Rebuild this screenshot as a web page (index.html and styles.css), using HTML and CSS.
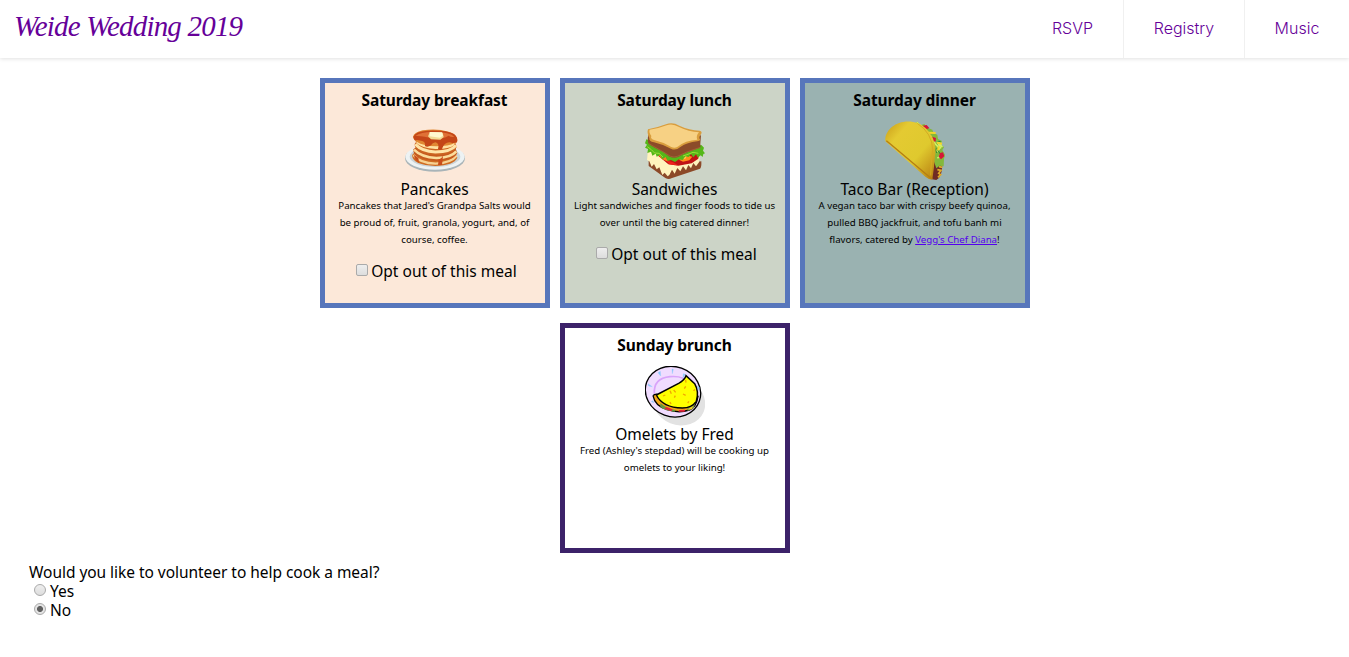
FILE: index.html
```html
<!DOCTYPE html>
<html lang="en">
<head>
<meta charset="utf-8">
<title>Weide Wedding 2019</title>
<link rel="stylesheet" href="styles.css">
</head>
<body>
<header class="header">
  <a class="logo">Weide Wedding 2019</a>
  <nav class="nav"><a class="nav-rsvp">RSVP</a><a class="nav-registry">Registry</a><a class="nav-music">Music</a></nav>
</header>
<main>
  <section class="meals">
    <article class="card breakfast">
      <h2>Saturday breakfast</h2>
      <svg class="pic" viewBox="15 3 180 180">
        <ellipse cx="105" cy="115" rx="90" ry="40" fill="#a9b4b8"/>
        <ellipse cx="105" cy="111" rx="89" ry="38" fill="#edf2f3"/>
        <ellipse cx="105" cy="110" rx="76" ry="31" fill="#c9d3d7"/>
        <path d="M36 106q3 30 70 32q55-2 66-25l-8-16H44z" fill="#cf6c22"/>
        <path d="M40 105q20 25 67 26q47-2 63-24" fill="none" stroke="#f7d293" stroke-width="7"/>
        <path d="M40 88q-2 29 66 35q57-1 66-24l-6-16H46z" fill="#c65a1e"/>
        <path d="M42 89q22 23 67 25q44-1 60-20" fill="none" stroke="#fbdc9b" stroke-width="8"/>
        <path d="M44 72q-2 28 62 33q57-1 64-25l-6-14H48z" fill="#cc6422"/>
        <path d="M46 73q20 22 60 23q47-1 62-20" fill="none" stroke="#ffe4a8" stroke-width="9"/>
        <path d="M39 51q2-14 29-20q41-7 78 4q27 8 26 27q-5 20-64 22q-61-5-69-33" fill="#e08733"/>
        <path d="M50 65q20 13 59 14q38 0 54-10v7q-21 13-57 11q-42-3-57-18z" fill="#ffe0a0"/>
        <path d="M40 50q6-16 42-18q58-2 80 10q13 10 9 25l-13 3q-8-5-17-2q-12 5-15 20q-7 5-12-1q5-17-8-20q-9 1-13 9q-11 7-18 2q2-12-8-15l-16-3q-9 4-11-10z" fill="#c44618"/>
        <path d="M47 47q20-13 56-11q45 0 60 14q-9 3-17-3q-16 10-42 10q-40-11-57-9" fill="#df7136"/>
        <path d="M116 119q8-2 13-12l-3 28h-12z" fill="#c94e1b"/>
        <path d="M42 104l13 10 2 14q-14-8-15-24" fill="#c94e1b"/>
        <path d="M84 49l6-13 38 2 3 13-10 8-28-1z" fill="#f2dc96"/>
        <path d="M89 36l37 1 3 10-10 6-30-4z" fill="#fff9cf"/>
      </svg>
      <p class="meal">Pancakes</p>
      <p class="desc">Pancakes that Jared's Grandpa Salts would<br>be proud of, fruit, granola, yogurt, and, of<br>course, coffee.</p>
      <label class="opt"><input type="checkbox"><span>Opt out of this meal</span></label>
    </article>
    <article class="card lunch">
      <h2>Saturday lunch</h2>
      <svg class="pic" viewBox="15 3 180 180">
        <path d="M26 122v16l50 36q10 5 18 1l86-29q5-3 4-22l-90 12z" fill="#8c4928"/>
        <path d="M24 90l-3 30 7 4 7 16 7-8 8 16 8-6 9 23 7-7 9 11 5-4 8-16 8 12 8-17 9 10 8-15 9 12 7-16 8 10 7-16 8 10 9-12 3-20-69-9z" fill="#fff3bd"/>
        <path d="M43 98l24 20 18 15 30 4 40-7 20-14 2-16-35-4-50 12z" fill="#c01214"/>
        <path d="M50 97l28 14 8 15-22-10z" fill="#ff7a22"/>
        <path d="M80 122q22 2 33 14l-26-3z" fill="#ef211b"/>
        <path d="M117 119l20-14 20 5-9 11-19 4z" fill="#ff8e1b"/>
        <path d="M121 117l20-10-5 9z" fill="#ffd64a"/>
        <path d="M19 58l-4 12 6 4-6 9 9 4-2 12 11-4 4 12 10-6 3 9 10-5 7 13 10-7 6 12 10-3 12 6 12-8 11 2 8-11 10 2 7-9 7 10 8-9 6 10 8-7 6 5 2-9 5-2-6-8 3-9-8-8-80 12z" fill="#55b719"/>
        <path d="M22 80l12 9 10 10 13 1 12 11m60-3l15-5 15-6 16 3" fill="none" stroke="#9add36" stroke-width="3"/>
        <path d="M25 42q-4 24 2 31l17 10 25 13 20 14q13 6 25 1l25-13 40-14q4-3 2-13l2-25-86 20z" fill="#8b4b29"/>
        <path d="M27 71l42 24 23 14q10 4 20 0l28-13 41-14" fill="none" stroke="#ad683e" stroke-width="2"/>
        <path d="M24 28Q49 24 78 13q19-8 40 4q30 14 61 15q9 2 4 11q-8 9-3 15q2 5-9 6q-29 3-50 17q-14 12-28 5Q70 74 42 67q-16-3-14-13q-8-15-4-26" fill="#d99d3d"/>
        <path d="M29 29Q58 25 80 16q17-7 37 5q29 14 60 16q-10 11-5 22q-36 2-59 21q-9 6-19 1Q69 66 42 60q-12-4-8-12q-8-11-5-19" fill="#f7d184"/>
      </svg>
      <p class="meal">Sandwiches</p>
      <p class="desc">Light sandwiches and finger foods to tide us<br>over until the big catered dinner!</p>
      <label class="opt"><input type="checkbox"><span>Opt out of this meal</span></label>
    </article>
    <article class="card dinner">
      <h2>Saturday dinner</h2>
      <svg class="pic" viewBox="15 3 180 180">
        <defs><linearGradient id="shell" x1="0" y1="0" x2="1" y2="1"><stop offset="0" stop-color="#c89a18"/><stop offset=".25" stop-color="#e4ca32"/><stop offset=".62" stop-color="#dfc92e"/><stop offset="1" stop-color="#b67b10"/></linearGradient></defs>
        <path d="M138 78q15 5 49 58-2 39-18 44l-22-4z" fill="#702b24"/>
        <path d="M172 149l11 2-7 9 6 4-8 8m3-32l10 2" fill="none" stroke="#e1ac28" stroke-width="5"/>
        <path d="M105 10l7-5 11 10 10-3 10 11 14 6 4 11 11 4 2 13 12 6-4 9 10 10-5 8 8 14-3 12-1 23-12-2-10 8-19-54z" fill="#83b83b"/>
        <path d="M110 7l17 14 11 18 16 14 12 19 13 13-8 9m-14-36l18 7 12 17m-25-21l11 5 9 20m-10 28l17-8" fill="none" stroke="#d3ee67" stroke-width="5"/>
        <path d="M140 28l12 17m5 23l13 31m-8-37l20 3m-12 20l16 25" fill="none" stroke="#2f8936" stroke-width="3"/>
        <path d="M145 38l22 1m4 29l15 3m-9 8l-3 12m4 15l12 3" stroke="#f5d528" stroke-width="6"/>
        <path d="M125 18l15-3 8 9-14 6zM156 50l12 4-1 11-10-3zM180 99l9-2 4 12-10 9-7-8z" fill="#d51638"/>
        <path d="M16 57C18 26 55-2 99 6c44 6 75 56 66 103q-3 37-8 69-8 2-21-8L22 69q-8-4-6-12" fill="url(#shell)"/>
        <path d="M19 62l13 11 113 95q9 8 12 7" fill="none" stroke="#b67f13" stroke-width="4"/>
        <path d="M112 10q45 30 46 79-5 41-6 77" fill="none" stroke="#d4aa22" stroke-width="3"/>
      </svg>
      <p class="meal">Taco Bar (Reception)</p>
      <p class="desc">A vegan taco bar with crispy beefy quinoa,<br>pulled BBQ jackfruit, and tofu banh mi<br>flavors, catered by <a class="link">Vegg's Chef Diana</a>!</p>
    </article>
    <article class="card brunch">
      <h2>Sunday brunch</h2>
      <svg class="pic" viewBox="15 12 180 180">
        <ellipse cx="117" cy="119" rx="80" ry="70" transform="rotate(22 117 119)" fill="#e2e2e2"/>
        <ellipse cx="99" cy="89" rx="84" ry="75" transform="rotate(20 99 89)" fill="#f0dcff" stroke="#000" stroke-width="4"/>
        <path d="M43 95q-3-46 47-51 43-3 53 18" fill="none" stroke="#d9a3fa" stroke-width="5"/>
        <path d="M24 65l13 9-11-2zM54 32l8 10-1-14zM96 21l1 14 3-13zM136 37l-7 10 1-12zM172 72l4 14 2-10zM34 119l8 3-4-6z" fill="#8bc9fb" stroke="#8bc9fb"/>
        <path d="M39 101q4-5 14-4l121 6q-6 35-26 41-31 11-66-1-37-10-43-42" fill="#f3a619" stroke="#000" stroke-width="4"/>
        <path d="M61 124q26 20 45 19l-2 6q-28-2-43-14" fill="#65993d"/>
        <path d="M79 135l19 7-4 6-21-8zm39 9l17-1-1 6h-19z" fill="#e5233a"/>
        <path d="M141 135l29-24-9 28-18 8z" fill="#8ba235"/>
        <path d="M145 142l13-12-2 12z" fill="#f5cf27"/>
        <path d="M49 99l67-35q18-10 22-23l26 24q14 24 5 53-14 20-42 20Q68 137 49 99" fill="#ff0" stroke="#000" stroke-width="4.5"/>
        <path d="M90 86l4 9m7-11l6 7M76 99l-7 3m68-29l-4 7m31 2l-3 5m-55 14l-3 6m26-11l8 4m-47 20l3 6m54-8l-4 5M137 54l1 8" stroke="#f2a600" stroke-width="4"/>
      </svg>
      <p class="meal">Omelets by Fred</p>
      <p class="desc">Fred (Ashley's stepdad) will be cooking up<br>omelets to your liking!</p>
    </article>
  </section>
  <section class="volunteer">
    <p class="question">Would you like to volunteer to help cook a meal?</p>
    <label><input type="radio" name="cook"><span>Yes</span></label>
    <label><input type="radio" name="cook" checked><span>No</span></label>
  </section>
</main>
</body>
</html>
```
FILE: styles.css
```css
* { box-sizing: border-box; }
body { margin: 0; background: #fff; color: #000; font: 15.5px/18px "Noto Sans", sans-serif; }
p, h2 { margin: 0; }
.header { height: 58px; display: flex; justify-content: space-between; box-shadow: 0 1px 4px rgba(0,0,0,.12); }
.logo { padding-left: 14px; color: #609; font: italic 29px/53px "Liberation Serif", serif; letter-spacing: -.8px; }
.nav { display: flex; color: #609; font: 300 16px/57px Inter, sans-serif; text-align: center; }
.nav a + a { border-left: 1px solid #f0f0f0; }
.nav-rsvp { width: 101px; }
.nav-registry { width: 121px; }
.nav-music { width: 105px; }
.meals { width: 710px; margin: 20px auto 0; display: flex; flex-wrap: wrap; justify-content: center; gap: 15px 10px; }
.card { width: 230px; height: 230px; border: 5px solid #5776bb; padding-top: 8px; display: flex; flex-direction: column; align-items: center; text-align: center; white-space: nowrap; }
.breakfast { background: #fce8d9; }
.lunch { background: #ccd4c7; }
.dinner { background: #9ab2b1; }
.brunch { border-color: #3c2269; }
.card h2 { font-size: 15.5px; line-height: 18px; font-weight: 700; letter-spacing: -.1px; }
.pic { width: 60px; height: 60px; margin-top: 12px; flex: none; }
.meal { margin-top: -1px; }
.desc { margin-top: -1px; font-size: 9.7px; line-height: 17px; }
.link { color: #50e; text-decoration: underline; }
.opt { display: flex; align-items: center; margin-top: 14px; gap: 3px; padding-left: 4px; letter-spacing: .03px; }
input { appearance: none; width: 12px; height: 12px; margin: 0; border: 1px solid #aaa; background: linear-gradient(#eee, #ddd); }
.opt input { border-radius: 2px; margin-top: -3px; }
.volunteer { padding: 10px 0 0 29px; line-height: 19px; }
.question { letter-spacing: -.04px; }
.volunteer label { display: flex; align-items: center; gap: 4px; padding-left: 5px; }
.volunteer input { border-radius: 50%; margin-top: -3px; }
.volunteer input:checked { background: radial-gradient(circle, #606060 0 2.6px, #e4e4e4 3.4px); }
```
